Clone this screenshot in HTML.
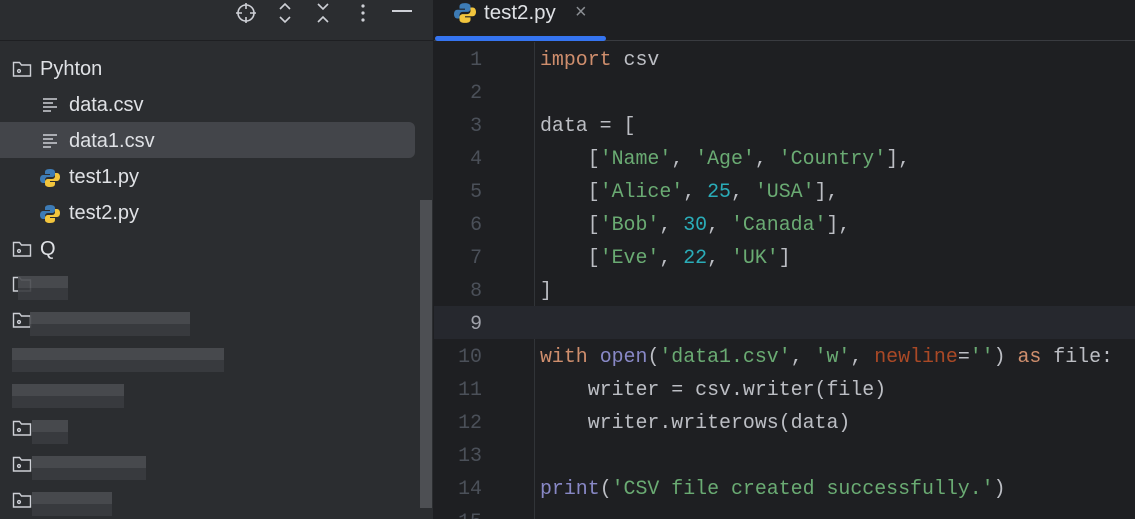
<!DOCTYPE html>
<html style="overflow:hidden;width:1135px;height:519px"><head><style>
*{margin:0;padding:0;box-sizing:border-box}
body{width:1135px;height:519px;overflow:hidden;background:#1e1f22;position:relative;font-family:"Liberation Sans",sans-serif}
#left{position:absolute;left:0;top:0;width:433px;height:519px;background:#2b2d30;overflow:hidden}
#lh{position:absolute;left:0;top:0;width:433px;height:41px;border-bottom:1px solid #1e1f22}
.row{position:absolute;left:0;height:36px;width:415px;color:#dfe1e5;font-size:20px;line-height:38px}
.sel{background:#43454a;border-radius:0 6px 6px 0}
.ic{position:absolute;top:10px}
.txt{position:absolute;top:0}
.blur{position:absolute;height:24px;background:linear-gradient(180deg,#4a4c50 0 50%,#3a3c40 50%);opacity:.9}
#sb{position:absolute;left:420px;top:200px;width:12px;height:308px;background:#4d4f53}
#tabs{position:absolute;left:434px;top:0;width:701px;height:41px;background:#1e1f22;border-bottom:1px solid #393b40}
#ul{position:absolute;left:435px;top:36px;width:171px;height:5px;background:#3574f0;border-radius:3px}
#gut{position:absolute;left:434px;top:42px;width:101px;height:477px;background:#1e1f22;border-right:1px solid #313438}
#code{position:absolute;left:0;top:0;width:1135px;height:519px;overflow:hidden}
.ln{position:absolute;width:48px;left:434px;text-align:right;color:#4b5059;font:19.9px "Liberation Mono",monospace;line-height:33px}
.cl{position:absolute;left:540px;color:#bcbec4;font:19.9px "Liberation Mono",monospace;line-height:33px;white-space:pre}
.k{color:#cf8e6d}.s{color:#6aab73}.n{color:#2aacb8}.b{color:#8888c6}.p{color:#aa4926}
#hl{position:absolute;left:434px;top:306px;width:701px;height:33px;background:#26282e}
</style></head><body>
<div id="left">
<div id="lh">
<svg style="position:absolute;left:235px;top:2px" width="22" height="22" viewBox="0 0 22 22" fill="none" stroke="#ced0d6" stroke-width="1.6"><circle cx="11" cy="11" r="8"/><path d="M11 1v6M11 15v6M1 11h6M15 11h6"/></svg>
<svg style="position:absolute;left:277px;top:2px" width="16" height="22" viewBox="0 0 16 22" fill="none" stroke="#ced0d6" stroke-width="1.6"><path d="M3 7l5-5 5 5M3 15l5 5 5-5"/></svg>
<svg style="position:absolute;left:315px;top:2px" width="16" height="22" viewBox="0 0 16 22" fill="none" stroke="#ced0d6" stroke-width="1.6"><path d="M3 2l5 5 5-5M3 20l5-5 5 5"/></svg>
<svg style="position:absolute;left:359px;top:2px" width="8" height="22"><circle cx="4" cy="4" r="1.6" fill="#ced0d6"/><circle cx="4" cy="11" r="1.6" fill="#ced0d6"/><circle cx="4" cy="18" r="1.6" fill="#ced0d6"/></svg>
<div style="position:absolute;left:392px;top:10px;width:20px;height:2px;background:#ced0d6"></div>
</div>
<div class="row" style="top:50px"><svg class="ic" style="left:12px" width="20" height="18" viewBox="0 0 20 18" fill="none" stroke="#ced0d6" stroke-width="1.4"><path d="M1.5 2.5h6l2 2.5h9v11h-17z"/><circle cx="7" cy="11" r="1.4"/></svg><span class="txt" style="left:40px">Pyhton</span></div>
<div class="row" style="top:86px"><svg class="ic" style="left:42px" width="18" height="18" stroke="#ced0d6" stroke-width="1.4"><path d="M1 3h14M1 7h10M1 11h14M1 15h8"/></svg><span class="txt" style="left:69px">data.csv</span></div>
<div class="row sel" style="top:122px"><svg class="ic" style="left:42px" width="18" height="18" stroke="#ced0d6" stroke-width="1.4"><path d="M1 3h14M1 7h10M1 11h14M1 15h8"/></svg><span class="txt" style="left:69px">data1.csv</span></div>
<div class="row" style="top:158px"><svg class="ic" style="left:40px" width="20" height="20" viewBox="0 0 20 20"><path d="M10 1c-4 0-5 1.5-5 3v2h5v1H3c-2 0-3 2-3 4s1 4 3 4h2v-3c0-1.5 1-3 3-3h4c1.5 0 3-1 3-3V4c0-2-2-3-5-3z" fill="#3d7bb5"/><path d="M10 19c4 0 5-1.5 5-3v-2h-5v-1h7c2 0 3-2 3-4s-1-4-3-4h-2v3c0 1.5-1 3-3 3H8c-1.5 0-3 1-3 3v2c0 2 2 3 5 3z" fill="#f2c53d"/></svg><span class="txt" style="left:69px">test1.py</span></div>
<div class="row" style="top:194px"><svg class="ic" style="left:40px" width="20" height="20" viewBox="0 0 20 20"><path d="M10 1c-4 0-5 1.5-5 3v2h5v1H3c-2 0-3 2-3 4s1 4 3 4h2v-3c0-1.5 1-3 3-3h4c1.5 0 3-1 3-3V4c0-2-2-3-5-3z" fill="#3d7bb5"/><path d="M10 19c4 0 5-1.5 5-3v-2h-5v-1h7c2 0 3-2 3-4s-1-4-3-4h-2v3c0 1.5-1 3-3 3H8c-1.5 0-3 1-3 3v2c0 2 2 3 5 3z" fill="#f2c53d"/></svg><span class="txt" style="left:69px">test2.py</span></div>
<div class="row" style="top:230px"><svg class="ic" style="left:12px" width="20" height="18" viewBox="0 0 20 18" fill="none" stroke="#ced0d6" stroke-width="1.4"><path d="M1.5 2.5h6l2 2.5h9v11h-17z"/><circle cx="7" cy="11" r="1.4"/></svg><span class="txt" style="left:40px">Q</span></div>
<svg style="position:absolute;left:12px;top:275px" width="20" height="18" fill="none" stroke="#ced0d6" stroke-width="1.4"><path d="M1.5 2.5h6l2 2.5h9v11h-17z"/></svg><div class="blur" style="left:18px;top:276px;width:50px"></div>
<svg style="position:absolute;left:12px;top:311px" width="20" height="18" fill="none" stroke="#ced0d6" stroke-width="1.4"><path d="M1.5 2.5h6l2 2.5h9v11h-17z"/><circle cx="7" cy="11" r="1.4"/></svg><div class="blur" style="left:30px;top:312px;width:160px"></div>
<div class="blur" style="left:12px;top:348px;width:212px"></div>
<div class="blur" style="left:12px;top:384px;width:112px"></div>
<svg style="position:absolute;left:12px;top:419px" width="20" height="18" fill="none" stroke="#ced0d6" stroke-width="1.4"><path d="M1.5 2.5h6l2 2.5h9v11h-17z"/><circle cx="7" cy="11" r="1.4"/></svg><div class="blur" style="left:32px;top:420px;width:36px"></div>
<svg style="position:absolute;left:12px;top:455px" width="20" height="18" fill="none" stroke="#ced0d6" stroke-width="1.4"><path d="M1.5 2.5h6l2 2.5h9v11h-17z"/><circle cx="7" cy="11" r="1.4"/></svg><div class="blur" style="left:32px;top:456px;width:114px"></div>
<svg style="position:absolute;left:12px;top:491px" width="20" height="18" fill="none" stroke="#ced0d6" stroke-width="1.4"><path d="M1.5 2.5h6l2 2.5h9v11h-17z"/><circle cx="7" cy="11" r="1.4"/></svg><div class="blur" style="left:32px;top:492px;width:80px"></div>
<div id="sb"></div>
</div>
<div id="tabs">
<svg style="position:absolute;left:20px;top:2px" width="22" height="22" viewBox="0 0 20 20"><path d="M10 1c-4 0-5 1.5-5 3v2h5v1H3c-2 0-3 2-3 4s1 4 3 4h2v-3c0-1.5 1-3 3-3h4c1.5 0 3-1 3-3V4c0-2-2-3-5-3z" fill="#3d7bb5"/><path d="M10 19c4 0 5-1.5 5-3v-2h-5v-1h7c2 0 3-2 3-4s-1-4-3-4h-2v3c0 1.5-1 3-3 3H8c-1.5 0-3 1-3 3v2c0 2 2 3 5 3z" fill="#f2c53d"/></svg>
<span style="position:absolute;left:50px;top:1px;color:#dfe1e5;font-size:20.5px">test2.py</span>
<span style="position:absolute;left:141px;top:1px;color:#8c8f94;font-size:20px">×</span>
</div>
<div id="ul"></div>
<div id="code">
<div id="gut"></div>
<div id="hl"></div>
<div class="ln" style="top:43px">1</div><div class="ln" style="top:76px">2</div><div class="ln" style="top:109px">3</div><div class="ln" style="top:142px">4</div><div class="ln" style="top:175px">5</div><div class="ln" style="top:208px">6</div><div class="ln" style="top:241px">7</div><div class="ln" style="top:274px">8</div><div class="ln" style="top:307px;color:#a1a3ab">9</div><div class="ln" style="top:340px">10</div><div class="ln" style="top:373px">11</div><div class="ln" style="top:406px">12</div><div class="ln" style="top:439px">13</div><div class="ln" style="top:472px">14</div><div class="ln" style="top:505px">15</div>
<div class="cl" style="top:43px"><span class="k">import</span> csv</div>
<div class="cl" style="top:109px">data = [</div>
<div class="cl" style="top:142px">    [<span class="s">'Name'</span>, <span class="s">'Age'</span>, <span class="s">'Country'</span>],</div>
<div class="cl" style="top:175px">    [<span class="s">'Alice'</span>, <span class="n">25</span>, <span class="s">'USA'</span>],</div>
<div class="cl" style="top:208px">    [<span class="s">'Bob'</span>, <span class="n">30</span>, <span class="s">'Canada'</span>],</div>
<div class="cl" style="top:241px">    [<span class="s">'Eve'</span>, <span class="n">22</span>, <span class="s">'UK'</span>]</div>
<div class="cl" style="top:274px">]</div>
<div class="cl" style="top:340px"><span class="k">with</span> <span class="b">open</span>(<span class="s">'data1.csv'</span>, <span class="s">'w'</span>, <span class="p">newline</span>=<span class="s">''</span>) <span class="k">as</span> file:</div>
<div class="cl" style="top:373px">    writer = csv.writer(file)</div>
<div class="cl" style="top:406px">    writer.writerows(data)</div>
<div class="cl" style="top:472px"><span class="b">print</span>(<span class="s">'CSV file created successfully.'</span>)</div>
</div>
</body></html>
